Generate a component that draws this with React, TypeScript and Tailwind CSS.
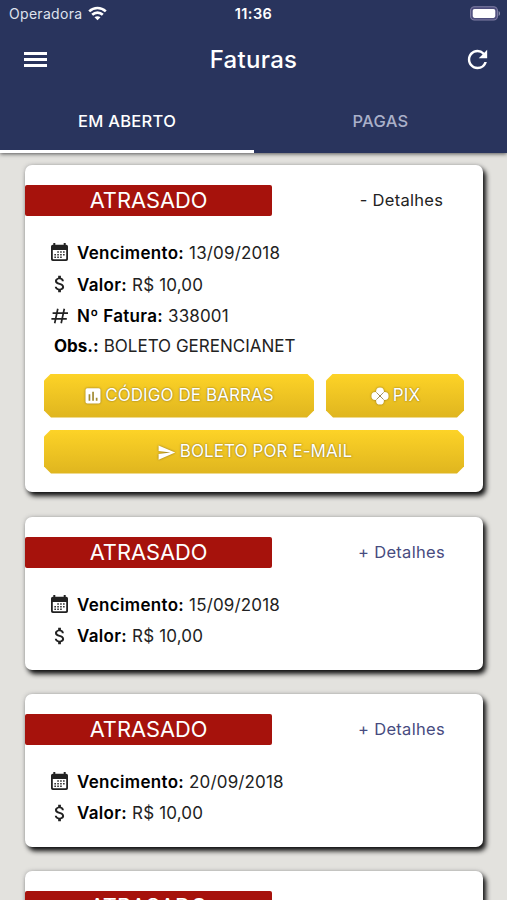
import type { ReactNode } from "react";
import clsx from "clsx";
import { MdAttachMoney, MdRefresh, MdSend } from "react-icons/md";

interface Invoice {
  id: string;
  dueDate: string;
  amount: string;
  number?: string;
  note?: string;
}

const invoices: Invoice[] = [
  { id: "1", dueDate: "13/09/2018", amount: "R$ 10,00", number: "338001", note: "BOLETO GERENCIANET" },
  { id: "2", dueDate: "15/09/2018", amount: "R$ 10,00" },
  { id: "3", dueDate: "20/09/2018", amount: "R$ 10,00" },
  { id: "4", dueDate: "25/09/2018", amount: "R$ 10,00" },
];

// ── Icons ───────────────────────────────────────────────────────────────────
function WifiIcon() {
  return (
    <svg width="19" height="15" viewBox="0 0 19 15" fill="none" stroke="white" strokeWidth="2.6">
      <path d="M1.2 5.4C6 .9 13 .9 17.8 5.4" />
      <path d="M4.2 8.8c3-2.9 7.6-2.9 10.6 0" />
      <path d="M9.5 14.2 6.5 11.3c1.7-1.5 4.3-1.5 6 0z" fill="white" stroke="none" />
    </svg>
  );
}

function BatteryIcon() {
  return (
    <svg width="31" height="15" viewBox="0 0 31 15">
      <rect x=".6" y=".8" width="26.8" height="13.2" rx="3.8" fill="#4d4d7c" stroke="#807fa5" strokeWidth="1.1" />
      <rect x="2.7" y="2.9" width="22.6" height="9" rx="1.8" fill="white" />
      <path d="M28.6 5c1.9.8 1.9 4.2 0 5z" fill="#8d8eae" />
    </svg>
  );
}

function CalendarIcon() {
  return (
    <svg width="17" height="19" viewBox="0 0 17 19" fill="#222">
      <path
        fillRule="evenodd"
        d="M2.3 0h2v1.7h8.4V0h2v1.7h.5A1.8 1.8 0 0 1 17 3.5v12.8a1.8 1.8 0 0 1-1.8 1.8H1.8A1.8 1.8 0 0 1 0 16.3V3.5a1.8 1.8 0 0 1 1.8-1.8h.5zM1.8 7v8.6c0 .5.2.7.7.7h12c.5 0 .7-.2.7-.7V7z"
      />
      <path d="M6.3 8.3h1.5v1.5H6.3zM9.2 8.3h1.5v1.5H9.2zM12.1 8.3h1.5v1.5h-1.5zM3.4 10.9h1.5v1.5H3.4zM6.3 10.9h1.5v1.5H6.3zM9.2 10.9h1.5v1.5H9.2zM12.1 10.9h1.5v1.5h-1.5zM3.4 13.5h1.5V15H3.4zM6.3 13.5h1.5V15H6.3zM9.2 13.5h1.5V15H9.2z" />
    </svg>
  );
}

function HashIcon() {
  return (
    <svg width="17" height="16" viewBox="0 0 17 16" fill="none" stroke="#222" strokeWidth="1.7">
      <path d="M6.8.7 3.7 15.3M13.3.7l-3.1 14.6M1.6 5.2H17M.4 10.8h15.4" />
    </svg>
  );
}

function ChartIcon() {
  return (
    <svg width="16" height="16" viewBox="0 0 16 16">
      <rect x=".5" y=".3" width="15" height="15.2" rx="1.8" fill="white" />
      <path d="M3.6 6.3h1.7v6.4H3.6zM7.2 3.8h1.7v8.9H7.2zM10.8 9.8h1.7v2.9h-1.7z" fill="#a18a31" />
    </svg>
  );
}

// four petals separated by a thin cross
function PixIcon() {
  return (
    <svg width="18" height="18" viewBox="0 0 18 18">
      <g fill="white">
        <circle cx="9" cy="4.3" r="3.9" />
        <circle cx="13.7" cy="9" r="3.9" />
        <circle cx="9" cy="13.7" r="3.9" />
        <circle cx="4.3" cy="9" r="3.9" />
      </g>
      <path d="m5.4 5.4 7.2 7.2M12.6 5.4l-7.2 7.2" fill="none" stroke="#9b8850" strokeWidth=".9" />
    </svg>
  );
}

// ── Building blocks ─────────────────────────────────────────────────────────
function Field({ icon, label, value }: { icon: ReactNode; label: string; value: string }) {
  return (
    <div className="flex h-[31.7px] items-center">
      <span className="flex w-[17px] shrink-0 justify-center pb-[2px]">{icon}</span>
      <p className="ml-[9px] flex gap-[5px] whitespace-nowrap">
        <b className="font-semibold tracking-[0.32px] text-black">{label}</b>
        <span className="tracking-[0.15px]">{value}</span>
      </p>
    </div>
  );
}

function ActionButton({ icon, label, className }: { icon: ReactNode; label: string; className?: string }) {
  return (
    <button
      type="button"
      className={clsx(
        "flex h-11 items-center justify-center gap-1 bg-linear-to-b from-[#fdd327] to-[#dfb51f] pl-px text-[17px] tracking-[0.08px] whitespace-nowrap text-white [text-shadow:0_0_2px_#77601a] [clip-path:polygon(7px_0,calc(100%_-_7px)_0,100%_7px,100%_calc(100%_-_7px),calc(100%_-_7px)_100%,7px_100%,0_calc(100%_-_7px),0_7px)]",
        className,
      )}
    >
      <span className="pt-px drop-shadow-[0_0_1px_#8f731f]">{icon}</span>
      <span>{label}</span>
    </button>
  );
}

function InvoiceCard({ invoice }: { invoice: Invoice }) {
  const expanded = invoice.number !== undefined;
  return (
    <article
      className={clsx(
        "shrink-0 rounded-[7px] bg-white pt-5 shadow-[3px_4px_5px_#111,0_0_4px_#aaa]",
        expanded ? "mb-[0.5px] h-[327px]" : "h-[153px]",
      )}
    >
      <div className="flex h-[31px] items-center">
        <span className="flex h-[31px] w-[247px] items-center justify-center rounded-[2px] bg-[#a6120c] text-[21.8px] text-white">
          ATRASADO
        </span>
        <button
          type="button"
          className={clsx("flex-1 pl-[48px] text-center text-[16.5px] tracking-[0.3px]", expanded ? "text-[#222]" : "text-[#474b80]")}
        >
          {expanded ? "- Detalhes" : "+ Detalhes"}
        </button>
      </div>

      <div className="pt-[22px] pl-[26px] text-[17px] text-[#222]">
        <Field icon={<CalendarIcon />} label="Vencimento:" value={invoice.dueDate} />
        <Field icon={<MdAttachMoney size={22} className="-mt-px shrink-0" />} label="Valor:" value={invoice.amount} />
        {expanded && (
          <>
            <Field icon={<HashIcon />} label="Nº Fatura:" value={invoice.number ?? ""} />
            <p className="flex h-[28px] items-center gap-[5px] pl-[3px] whitespace-nowrap">
              <b className="font-bold text-black">Obs.:</b> {invoice.note}
            </p>
          </>
        )}
      </div>

      {expanded && (
        <div className="flex flex-col gap-3 px-[19px] pt-[12.5px]">
          <div className="flex gap-3">
            <ActionButton icon={<ChartIcon />} label="CÓDIGO DE BARRAS" className="w-[270px]" />
            <ActionButton icon={<PixIcon />} label="PIX" className="flex-1" />
          </div>
          <ActionButton icon={<MdSend size={19} />} label="BOLETO POR E-MAIL" />
        </div>
      )}
    </article>
  );
}

export default function App() {
  return (
    <div className="flex h-[900px] w-[507px] flex-col overflow-hidden bg-[#e3e2de] font-['Inter',sans-serif]">
      <header className="z-10 flex h-[153px] shrink-0 flex-col bg-[#29345d] text-white shadow-[0_1px_4px_#555]">
        <div className="grid h-[27px] grid-cols-3 items-center pr-[6px] pl-[9px] text-[14px]">
          <div className="flex items-center gap-[6px] text-[#dfe2ed]">
            <span className="tracking-[0.3px]">Operadora</span>
            <WifiIcon />
          </div>
          <span className="pr-[3px] text-center text-[14.5px] font-semibold tracking-[0.4px]">11:36</span>
          <span className="flex justify-end">
            <BatteryIcon />
          </span>
        </div>

        <div className="flex h-[65px] items-center justify-between pr-[15px] pl-6">
          <button type="button" aria-label="Menu" className="flex w-[23px] flex-col gap-[3.5px]">
            <span className="h-[2.7px] bg-white" />
            <span className="h-[2.7px] bg-white" />
            <span className="h-[2.7px] bg-white" />
          </button>
          <h1 className="pr-[3px] text-[24px] font-medium tracking-[0.3px]">Faturas</h1>
          <button type="button" aria-label="Atualizar">
            <MdRefresh size={29} />
          </button>
        </div>

        <nav className="flex flex-1 text-[16.5px] font-medium">
          <button type="button" className="flex w-[254px] items-center justify-center border-b-[3px] border-white pt-px tracking-[0.3px]">
            EM ABERTO
          </button>
          <button type="button" className="flex flex-1 items-center justify-center border-b-[3px] border-transparent pt-px tracking-[0.3px] text-[#aab0c9]">
            PAGAS
          </button>
        </nav>
      </header>

      <main className="flex flex-1 flex-col gap-6 overflow-hidden pt-3 pr-6 pl-[25px]">
        {invoices.map((invoice) => (
          <InvoiceCard key={invoice.id} invoice={invoice} />
        ))}
      </main>
    </div>
  );
}
